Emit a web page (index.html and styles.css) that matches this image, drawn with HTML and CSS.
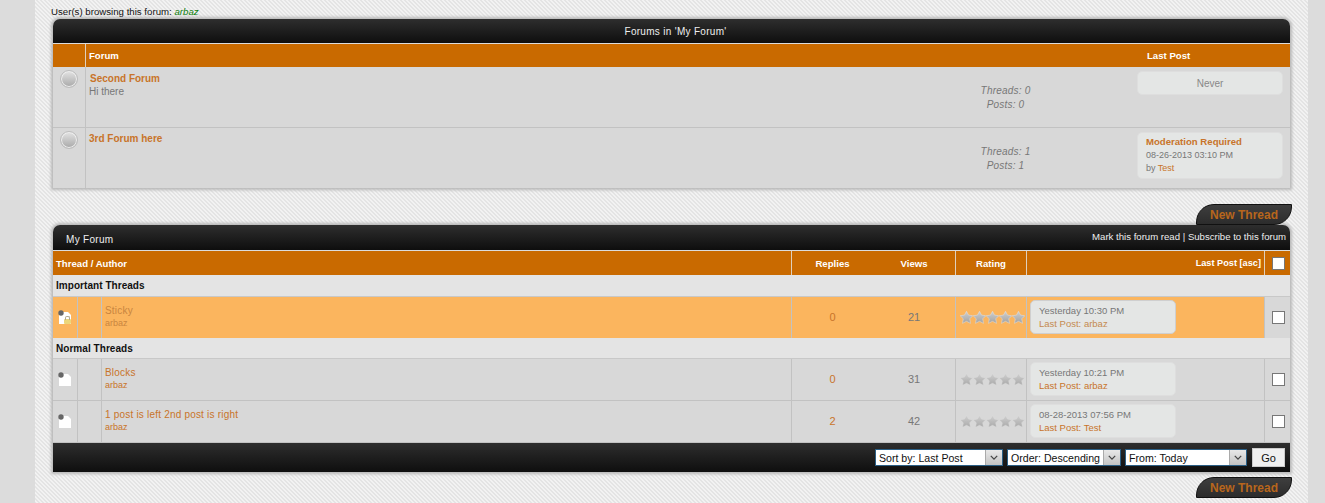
FILE: index.html
```html
<!DOCTYPE html>
<html lang="en">
<head>
    <meta charset="UTF-8">
    <title>My Forum</title>
    <link rel="stylesheet" href="styles.css">
</head>
<body>
    <svg class="defs" width="0" height="0">
        <defs>
            <linearGradient id="starFill" x1="0" y1="0" x2="0" y2="1">
                <stop offset="0" stop-color="#cfcfcf"/>
                <stop offset="1" stop-color="#a2a2a2"/>
            </linearGradient>
            <symbol id="star" viewBox="0 0 14 14">
                <path d="M7 .3L9.2 4.4 13.8 5.1 10.5 8.4 11.3 13.3 7 11.1 2.7 13.3 3.5 8.4 .2 5.1 4.8 4.4z" fill="url(#starFill)" stroke="#dedede" stroke-width=".6" stroke-linejoin="round"/>
            </symbol>
            <symbol id="doc" viewBox="0 0 16 16">
                <path d="M2 3h9l3 3v9H2z" fill="#fff"/>
                <circle cx="4" cy="4" r="2.7" fill="#666"/>
            </symbol>
            <symbol id="chevron" viewBox="0 0 10 8">
                <path d="M1 2l4 4 4-4" fill="none" stroke="#444" stroke-width="1.6"/>
            </symbol>
        </defs>
    </svg>

    <div class="wrapper">
        <div class="browsing">User(s) browsing this forum: <a href="#" class="online">arbaz</a></div>

        <div class="panel">
            <div class="panel-title centered">Forums in 'My Forum'</div>
            <table class="grid forums">
                <colgroup><col class="c-status"><col><col class="c-stats"><col class="c-last"></colgroup>
                <tr class="head">
                    <th></th>
                    <th class="sep">Forum</th>
                    <th></th>
                    <th class="lastpost-head">Last Post</th>
                </tr>
                <tr class="forum-row">
                    <td class="icon"><span class="bulb"></span></td>
                    <td class="sep info">
                        <a href="#" class="forum-name">Second Forum</a>
                        <div class="desc">Hi there</div>
                    </td>
                    <td class="stats">
                        <div>Threads: 0</div>
                        <div>Posts: 0</div>
                    </td>
                    <td class="last">
                        <div class="lastbox never">Never</div>
                    </td>
                </tr>
                <tr class="forum-row">
                    <td class="icon"><span class="bulb"></span></td>
                    <td class="sep info">
                        <a href="#" class="forum-name">3rd Forum here</a>
                    </td>
                    <td class="stats">
                        <div>Threads: 1</div>
                        <div>Posts: 1</div>
                    </td>
                    <td class="last">
                        <div class="lastbox tall">
                            <a href="#" class="forum-name">Moderation Required</a>
                            <div>08-26-2013 03:10 PM</div>
                            <div>by <a href="#">Test</a></div>
                        </div>
                    </td>
                </tr>
            </table>
        </div>

        <div class="tabrow first"><a href="#" class="newthread">New Thread</a></div>

        <div class="panel">
            <div class="panel-title split">
                <span class="title-name">My Forum</span>
                <span class="title-links"><a href="#">Mark this forum read</a> | <a href="#">Subscribe to this forum</a></span>
            </div>
            <table class="grid threads">
                <colgroup>
                    <col class="t-icon"><col class="t-prefix"><col><col class="t-replies"><col class="t-views">
                    <col class="t-rating"><col class="t-last"><col class="t-check">
                </colgroup>
                <tr class="head">
                    <th colspan="3">Thread / Author</th>
                    <th class="sep center">Replies</th>
                    <th class="center">Views</th>
                    <th class="sep center">Rating</th>
                    <th class="sep right">Last Post [asc]</th>
                    <th class="sep checkcell"><input type="checkbox" class="check"></th>
                </tr>
                <tr class="section important"><td colspan="8">Important Threads</td></tr>
                <tr class="thread sticky">
                    <td class="center"><span class="doc-wrap"><svg class="doc"><use href="#doc"/></svg><span class="lock"></span></span></td>
                    <td class="sep"></td>
                    <td class="sep subject"><a href="#">Sticky</a><div class="author">arbaz</div></td>
                    <td class="sep center count"><a href="#">0</a></td>
                    <td class="center count">21</td>
                    <td class="sep rating"><svg class="star"><use href="#star"/></svg><svg class="star"><use href="#star"/></svg><svg class="star"><use href="#star"/></svg><svg class="star"><use href="#star"/></svg><svg class="star"><use href="#star"/></svg></td>
                    <td class="sep last"><div class="lastbox thread-box"><div>Yesterday 10:30 PM</div><div class="lastline">Last Post: <a href="#">arbaz</a></div></div></td>
                    <td class="sep checkcell"><input type="checkbox" class="check"></td>
                </tr>
                <tr class="section"><td colspan="8">Normal Threads</td></tr>
                <tr class="thread">
                    <td class="center"><span class="doc-wrap"><svg class="doc"><use href="#doc"/></svg></span></td>
                    <td class="sep"></td>
                    <td class="sep subject"><a href="#">Blocks</a><div class="author">arbaz</div></td>
                    <td class="sep center count"><a href="#">0</a></td>
                    <td class="center count">31</td>
                    <td class="sep rating faded"><svg class="star"><use href="#star"/></svg><svg class="star"><use href="#star"/></svg><svg class="star"><use href="#star"/></svg><svg class="star"><use href="#star"/></svg><svg class="star"><use href="#star"/></svg></td>
                    <td class="sep last"><div class="lastbox thread-box"><div>Yesterday 10:21 PM</div><div class="lastline">Last Post: <a href="#">arbaz</a></div></div></td>
                    <td class="sep checkcell"><input type="checkbox" class="check"></td>
                </tr>
                <tr class="thread">
                    <td class="center"><span class="doc-wrap"><svg class="doc"><use href="#doc"/></svg></span></td>
                    <td class="sep"></td>
                    <td class="sep subject"><a href="#">1 post is left 2nd post is right</a><div class="author">arbaz</div></td>
                    <td class="sep center count"><a href="#">2</a></td>
                    <td class="center count">42</td>
                    <td class="sep rating faded"><svg class="star"><use href="#star"/></svg><svg class="star"><use href="#star"/></svg><svg class="star"><use href="#star"/></svg><svg class="star"><use href="#star"/></svg><svg class="star"><use href="#star"/></svg></td>
                    <td class="sep last"><div class="lastbox thread-box"><div>08-28-2013 07:56 PM</div><div class="lastline">Last Post: <a href="#">Test</a></div></div></td>
                    <td class="sep checkcell"><input type="checkbox" class="check"></td>
                </tr>
            </table>
            <div class="panel-foot">
                <div class="pick pick-sort">
                    <select><option>Sort by: Last Post</option></select>
                    <span class="pick-arrow"><svg class="chev"><use href="#chevron"/></svg></span>
                </div>
                <div class="pick pick-order">
                    <select><option>Order: Descending</option></select>
                    <span class="pick-arrow"><svg class="chev"><use href="#chevron"/></svg></span>
                </div>
                <div class="pick pick-from">
                    <select><option>From: Today</option></select>
                    <span class="pick-arrow"><svg class="chev"><use href="#chevron"/></svg></span>
                </div>
                <button class="go">Go</button>
            </div>
        </div>

        <div class="tabrow second"><a href="#" class="newthread">New Thread</a></div>
    </div>
</body>
</html>
```

FILE: styles.css
```css
html, body {
    margin: 0;
    height: 503px;
    overflow: hidden;
}
body {
    background-color: #dcdcdc;
    font-family: "Liberation Sans", Arial, sans-serif;
    font-size: 10px;
    color: #777;
    padding: 0 17px 0 35px;
}
a {
    color: #c8742a;
    text-decoration: none;
}
.defs {
    display: block;
    height: 0;
}
.wrapper {
    height: 503px;
    padding: 5px 18px 0 18px;
    box-sizing: border-box;
    background-color: #ececec;
    background-image: repeating-linear-gradient(45deg, #e4e4e4 0, #e4e4e4 1.06px, #f2f2f2 1.06px, #f2f2f2 2.828px);
}
.browsing {
    height: 14px;
    line-height: 13px;
    color: #111;
    margin-left: -2px;
    font-size: 9.67px;
}
.online {
    color: #0a7d0a;
    font-style: italic;
}

/* panels */
.panel {
    background-color: #d8d8d8;
    border-radius: 7px 7px 0 0;
    box-shadow: 0 0 3px 2px #b8b8b8;
}
.panel-title {
    height: 24px;
    line-height: 26px;
    border-radius: 7px 7px 0 0;
    border-bottom: 1px solid #dcdcdc;
    background: linear-gradient(#2e2e2e, #0e0e0e);
    color: #eee;
    letter-spacing: .3px;
}
.centered {
    text-align: center;
    padding-left: 8px;
}
.split {
    display: flex;
    justify-content: space-between;
    padding: 0 4px 0 13px;
    height: 25px;
}
.title-links {
    line-height: 24px;
    font-size: 9.6px;
    letter-spacing: 0;
}
.title-links a {
    color: #eee;
}
.title-name {
    line-height: 29px;
}

/* tables */
.grid {
    width: 100%;
    table-layout: fixed;
    border-collapse: separate;
    border-spacing: 0;
}
.grid th, .grid td {
    padding: 0;
    box-sizing: border-box;
}
.grid .head th {
    height: 23px;
    background-color: #c96a00;
    color: #fff;
    text-align: left;
    font-size: 9.6px;
    font-weight: bold;
    padding: 0 3px;
}
.threads .head th {
    height: 24px;
}
.grid .head th.sep {
    border-left: 1px solid #e0d0bc;
}
.grid td.sep {
    border-left: 1px solid #c2c2c2;
}
.grid .center, .grid .head th.center {
    text-align: center;
}
.grid .head th.right {
    text-align: right;
    font-size: 9.2px;
}
.grid .head th.lastpost-head {
    padding-left: 13px;
}
.grid .checkcell, .grid .head th.checkcell {
    padding-left: 7px;
}

/* forum list */
.c-status { width: 32px; }
.c-stats { width: 200px; }
.c-last { width: 156px; }
.forum-row td {
    height: 60px;
    vertical-align: top;
}
.forum-row:nth-child(2) td {
    height: 61px;
    border-bottom: 1px solid #c2c2c2;
}
.bulb {
    display: block;
    box-sizing: border-box;
    width: 18px;
    height: 18px;
    margin: 3px 0 0 7px;
    border-radius: 50%;
    border: 1px solid #bdbdbd;
    box-shadow: 0 0 0 1px #efefef inset;
    background: linear-gradient(#e4e4e4, #a8a8a8);
}
.grid .info {
    padding: 5px 0 0 4px;
    line-height: 13px;
}
.grid .forum-row + .forum-row .info {
    padding: 4px 0 0 3px;
}
.forum-name {
    font-weight: bold;
}
.desc {
    margin-left: -1px;
    color: #777;
}
.grid .stats {
    padding: 17px 57px 0 0;
    text-align: center;
    font-style: italic;
    letter-spacing: .2px;
    line-height: 14px;
}
.grid .last {
    padding: 4px 0 0 3px;
}
.lastbox {
    box-sizing: border-box;
    background-color: #e4e6e5;
    border: 1px solid #dedede;
    border-radius: 5px;
    margin-right: 7px;
    line-height: 13px;
}
.never {
    height: 24px;
    line-height: 23px;
    text-align: center;
    color: #888;
}
.tall {
    height: 47px;
    padding: 2px 8px;
    font-size: 9px;
}
.tall .forum-name {
    font-size: 9.6px;
}

/* new thread tab */
.tabrow {
    display: flex;
    justify-content: flex-end;
    margin-right: -2px;
}
.tabrow.first {
    padding-top: 16px;
    height: 21px;
}
.tabrow.second {
    padding-top: 5px;
}
.newthread {
    display: block;
    width: 96px;
    height: 21px;
    line-height: 21px;
    box-sizing: border-box;
    padding-left: 13px;
    font-size: 12px;
    font-weight: bold;
    color: #b8661c;
    background: linear-gradient(#3e3e3e, #2c2c2c);
    border: 1px solid #111;
    border-radius: 18px 0 18px 0;
}

/* thread list */
.t-icon { width: 24px; }
.t-prefix { width: 24px; }
.t-replies { width: 82px; }
.t-views { width: 82px; }
.t-rating { width: 71px; }
.t-last { width: 238px; }
.t-check { width: 26px; }
.grid .section td {
    height: 21px;
    background-color: #e4e4e4;
    color: #111;
    font-size: 10px;
    letter-spacing: .05px;
    font-weight: bold;
    padding-left: 3px;
    border-bottom: 1px solid #c8c8c8;
}
.grid .important td {
    height: 22px;
}
.thread td {
    height: 42px;
    border-bottom: 1px solid #c2c2c2;
}
.grid .thread td {
    padding-bottom: 1px;
}
.sticky td {
    height: 41px;
    background-color: #fbb55e;
    border-bottom: none;
}
.sticky td.checkcell {
    background-color: #d8d8d8;
}
.grid .subject {
    padding-left: 3px;
    color: #c8742a;
    line-height: 13px;
}
.subject a {
    letter-spacing: .2px;
}
.author {
    font-size: 9px;
}
.sticky .subject, .sticky .subject a {
    color: #c98540;
}
.doc-wrap {
    position: relative;
    display: inline-block;
    vertical-align: middle;
    width: 16px;
    height: 16px;
}
.doc {
    display: block;
    width: 16px;
    height: 16px;
}
.lock {
    position: absolute;
    right: 2px;
    bottom: 1px;
    width: 7px;
    height: 5px;
    background-color: #ecd67a;
    border-radius: 1px;
}
.lock::before {
    content: "";
    position: absolute;
    left: 1px;
    top: -3px;
    width: 3px;
    height: 3px;
    border: 1px solid #b0a890;
    border-bottom: none;
    border-radius: 2px 2px 0 0;
}
.count {
    font-size: 11px;
    color: #777;
}
.grid .rating {
    padding-left: 4px;
    white-space: nowrap;
    font-size: 0;
}
.star {
    width: 13px;
    height: 13px;
}
.faded .star {
    opacity: .85;
}
.lastbox.thread-box {
    width: 146px;
    height: 34px;
    padding: 3px 8px;
    margin: 0;
    font-size: 9.5px;
}
.grid .thread .last {
    padding: 0 0 1px 3px;
}
.sticky .thread-box {
    border-color: #cfcfcf;
}
.lastline, .lastline a {
    color: #c8742a;
}
.sticky .lastline, .sticky .lastline a {
    color: #c48a50;
}
.check {
    appearance: none;
    display: block;
    width: 13px;
    height: 13px;
    margin: 0;
    background-color: #fff;
    border: 1px solid #777;
}

/* footer */
.panel-foot {
    display: flex;
    justify-content: flex-end;
    align-items: center;
    height: 29px;
    padding-right: 5px;
    background: linear-gradient(#2e2e2e, #0e0e0e);
}
.pick {
    display: flex;
    height: 17px;
    margin-right: 4px;
    box-sizing: border-box;
    background-color: #fff;
    border: 1px solid #2b5f85;
}
.pick select {
    appearance: none;
    flex: 1;
    min-width: 0;
    border: none;
    outline: none;
    background: #fff;
    padding: 0 0 0 3px;
    font-family: "Liberation Sans", Arial, sans-serif;
    font-size: 10.6px;
    color: #111;
}
.pick-sort { width: 128px; }
.pick-order { width: 114px; }
.pick-from { width: 122px; }
.pick-arrow {
    display: flex;
    align-items: center;
    justify-content: center;
    width: 16px;
    background: linear-gradient(#e8e8e8, #c4c4c4);
    border-left: 1px solid #aaa;
}
.chev {
    width: 8px;
    height: 7px;
}
.go {
    width: 33px;
    height: 19px;
    margin-left: 1px;
    padding: 0;
    background: #f0f0f0;
    border: 1px solid #ccc;
    font-family: "Liberation Sans", Arial, sans-serif;
    font-size: 11px;
    color: #111;
}
```
